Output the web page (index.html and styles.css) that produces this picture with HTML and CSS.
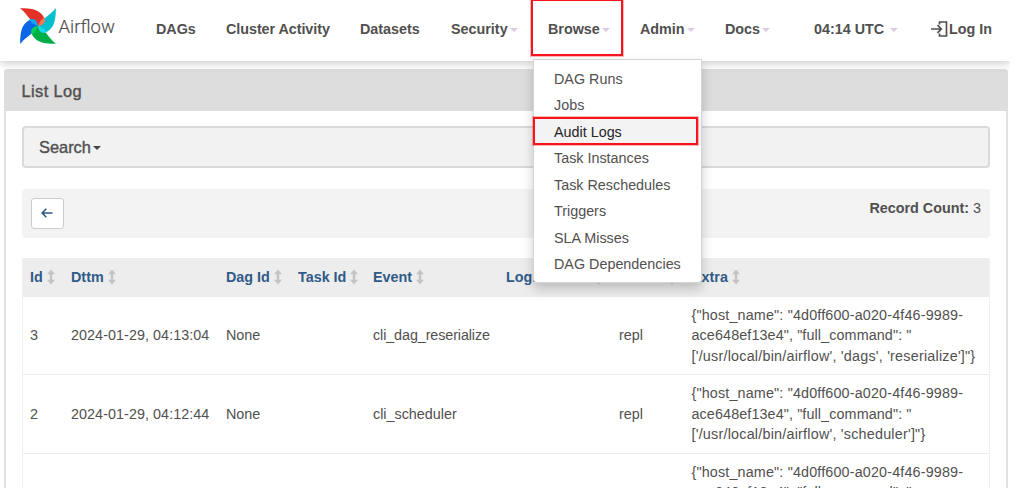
FILE: index.html
```html
<!DOCTYPE html>
<html lang="en">
<head>
<meta charset="utf-8">
<title>Airflow - List Log</title>
<link rel="stylesheet" href="styles.css">
</head>
<body>
<svg class="defs" width="0" height="0">
  <symbol id="sort" viewBox="0 0 8 16"><path d="M4 .4 8 5.200H5.200v5.600H8L4 15.600 0 10.800h2.800V5.200H0z" fill="currentColor"/></symbol>
  <symbol id="blade" viewBox="0 0 38 38"><path d="M1 1.200C9 1 18 2 22 6.500c3 3.500 4 5.500 4.200 7.500L19 19.300C17.500 15.500 14 15.500 11 12 8 8.500 6 5 1 1.200z"/></symbol>
  <symbol id="fold" viewBox="0 0 38 38"><path d="M19 19C20.500 15.500 21.500 12.500 25 10.500c2 3.500 1 7.500-6 8.500z"/></symbol>
</svg>
<div class="screen">
  <header class="navbar">
    <a class="brand">
      <svg class="logo" viewBox="0 0 38 38">
        <use href="#blade" fill="#e43127"/>
        <use href="#blade" fill="#00c0ce" transform="rotate(90 19 19)"/>
        <use href="#blade" fill="#00ad46" transform="rotate(180 19 19)"/>
        <use href="#blade" fill="#0b67e8" transform="rotate(270 19 19)"/>
        <use href="#fold" fill="#ff7557"/>
        <use href="#fold" fill="#11dcea" transform="rotate(90 19 19)"/>
        <use href="#fold" fill="#04cf59" transform="rotate(180 19 19)"/>
        <use href="#fold" fill="#0ca6f5" transform="rotate(270 19 19)"/>
      </svg>
      <span class="wordmark">Airflow</span>
    </a>
    <nav class="menu">
      <a class="n-dags"><span>DAGs</span></a>
      <a class="n-cluster"><span>Cluster Activity</span></a>
      <a class="n-data"><span>Datasets</span></a>
      <a class="n-sec"><span>Security</span><i class="caret"></i></a>
      <a class="n-browse"><span>Browse</span><i class="caret"></i></a>
      <a class="n-admin"><span>Admin</span><i class="caret"></i></a>
      <a class="n-docs"><span>Docs</span><i class="caret"></i></a>
      <a class="n-clock"><span>04:14 UTC</span><i class="caret"></i></a>
      <a class="n-login"><svg class="login" viewBox="0 0 18 16" fill="none" stroke="currentColor" stroke-width="1.700"><path d="M1 8h10.500M7.500 4.200 11.300 8l-3.800 3.800M9.500 3.500V1h7v14h-7v-2.500"/></svg><span>Log In</span></a>
    </nav>
  </header>

  <ul class="dropdown">
    <li>DAG Runs</li>
    <li>Jobs</li>
    <li class="active">Audit Logs</li>
    <li>Task Instances</li>
    <li>Task Reschedules</li>
    <li>Triggers</li>
    <li>SLA Misses</li>
    <li>DAG Dependencies</li>
  </ul>
  <div class="mark mark-browse"></div>
  <div class="mark mark-audit"></div>

  <main class="panel">
    <h1 class="panel-title"><span>List Log</span></h1>
    <div class="panel-body">
      <div class="search"><span>Search</span><i class="caret dark"></i></div>
      <div class="toolbar">
        <button class="back"><svg width="12" height="10" viewBox="0 0 12 10" fill="none" stroke="currentColor" stroke-width="1.600"><path d="M11.500 5H1.500M5.300.8 1.200 5l4.100 4.200"/></svg></button>
        <div class="count"><b>Record Count:</b> 3</div>
      </div>
      <table>
        <colgroup><col class="c1"><col class="c2"><col class="c3"><col class="c4"><col class="c5"><col class="c6"><col class="c7"><col></colgroup>
        <thead><tr>
          <th>Id<svg class="sort"><use href="#sort"/></svg></th>
          <th>Dttm<svg class="sort"><use href="#sort"/></svg></th>
          <th>Dag Id<svg class="sort"><use href="#sort"/></svg></th>
          <th>Task Id<svg class="sort"><use href="#sort"/></svg></th>
          <th>Event<svg class="sort"><use href="#sort"/></svg></th>
          <th>Logical Date<svg class="sort"><use href="#sort"/></svg></th>
          <th>Owner<svg class="sort"><use href="#sort"/></svg></th>
          <th>Extra<svg class="sort"><use href="#sort"/></svg></th>
        </tr></thead>
        <tbody>
          <tr><td>3</td><td class="date">2024-01-29, 04:13:04</td><td>None</td><td></td><td class="event">cli_dag_reserialize</td><td></td><td>repl</td>
            <td class="extra"><span class="l1">{"host_name": "4d0ff600-a020-4f46-9989-</span><br><span class="l2">ace648ef13e4", "full_command": "</span><br><span class="l3">['/usr/local/bin/airflow', 'dags', 'reserialize']"}</span></td></tr>
          <tr><td>2</td><td class="date">2024-01-29, 04:12:44</td><td>None</td><td></td><td>cli_scheduler</td><td></td><td>repl</td>
            <td class="extra"><span class="l1">{"host_name": "4d0ff600-a020-4f46-9989-</span><br><span class="l2">ace648ef13e4", "full_command": "</span><br><span class="l3">['/usr/local/bin/airflow', 'scheduler']"}</span></td></tr>
          <tr><td></td><td></td><td></td><td></td><td></td><td></td><td></td>
            <td class="extra last"><span class="l1">{"host_name": "4d0ff600-a020-4f46-9989-</span><br><span class="l2">ace648ef13e4", "full_command": "</span></td></tr>
        </tbody>
      </table>
    </div>
  </main>
</div>
</body>
</html>
```

FILE: styles.css
```css
* { box-sizing: border-box; }
body {
  margin: 0;
  background: #fff;
  color: #51504f;
  font: 14.35px/20.5px "Liberation Sans", Arial, sans-serif;
}
.defs { position: absolute; }
.screen {
  position: relative;
  width: 1010px;
  height: 488px;
  overflow: hidden;
}

/* Top navigation */
.navbar {
  position: relative;
  z-index: 1;
  display: flex;
  height: 61px;
  padding-left: 19px;
  background: #fff;
  box-shadow: 0 2px 9px rgba(0, 0, 0, .22);
}
.brand { display: flex; width: 137px; }
.logo { width: 38px; height: 38px; margin-top: 7px; }
.wordmark { margin: 17px 0 0 1.5px; font: 300 18.500px/21px Roboto, sans-serif; -webkit-text-stroke: .2px; }
.menu { display: flex; height: 58px; font-weight: bold; white-space: nowrap; }
.menu a { display: flex; align-items: center; }
.n-dags { width: 70px; }
.n-cluster { width: 134px; letter-spacing: -.05px; }
.n-data { width: 91px; }
.n-sec { width: 97px; }
.n-browse { width: 92px; }
.n-admin { width: 85px; }
.n-docs { width: 89px; }
.n-clock { width: 116px; }
.n-clock .caret { margin-left: 6px; }
.login { width: 18px; height: 16px; margin-right: 1px; }
.caret {
  margin: 2px 0 0 2px;
  border: 4px solid transparent;
  border-top-color: #e0cce2;
  border-bottom: 0;
}
.caret.dark { border-top-color: #444; margin-left: 3px; }

/* Browse menu */
.dropdown {
  position: absolute;
  z-index: 2;
  left: 533px;
  top: 59px;
  width: 169px;
  height: 224px;
  margin: 0;
  padding: 5.5px 0;
  list-style: none;
  background: #fff;
  border: 1px solid #d4d4d4;
  border-radius: 0 0 4px 4px;
  box-shadow: 0 6px 12px rgba(0, 0, 0, .2);
}
.dropdown li { height: 26.500px; padding-left: 20px; line-height: 26.500px; }
.dropdown .active { background: #f3f3f3; color: #252525; }
.mark { position: absolute; z-index: 3; border: 2.5px solid #f8141c; outline: .5px solid rgba(248, 20, 28, .3); }
.mark-browse { left: 531px; top: -1px; width: 92px; height: 57px; }
.mark-audit { left: 533px; top: 117px; width: 165px; height: 28px; }

/* Log list */
.panel {
  width: 1004px;
  height: 460px;
  margin: 8px 0 0 4px;
  border: 2px solid #e2e2e2;
  border-radius: 4px;
}
.panel-title {
  height: 42px;
  margin: -2px -2px 0;
  padding: 2px 0 0 17.500px;
  background: #ddd;
  border-radius: 4px 4px 0 0;
  font-size: 16.400px;
  letter-spacing: .4px;
  font-weight: normal;
  line-height: 41px;
  -webkit-text-stroke: .4px;
}
.panel-body { padding: 15px 16px 0; }
.search {
  display: flex;
  align-items: center;
  height: 42px;
  padding-left: 15px;
  background: #f2f2f2;
  border: 2px solid #dadada;
  border-radius: 4px;
  font-size: 16.400px;
  -webkit-text-stroke: .4px;
}
.search .caret { margin-left: 2px; }
.toolbar {
  display: flex;
  justify-content: space-between;
  height: 49px;
  margin: 21px 0 20px;
  padding: 9px 9px;
  background: #f3f3f3;
  border-radius: 4px;
}
.back {
  display: flex;
  align-items: center;
  justify-content: center;
  width: 33px;
  height: 31px;
  padding: 0 1px 1px 0;
  color: #2c5888;
  background: #fff;
  border: 1px solid #ccc;
  border-radius: 3px;
}
table {
  width: 968px;
  border-collapse: separate;
  border-spacing: 0;
  table-layout: fixed;
  border: 1px solid #f0f0f0;
  border-top: 0;
}
.c1 { width: 40px; }
.c2 { width: 155px; }
.c3 { width: 72px; }
.c4 { width: 75px; }
.c5 { width: 133px; }
.c6 { width: 113px; }
.c7 { width: 73px; }
th {
  height: 38.5px;
  padding: 0 0 0 8px;
  background: #ededed;
  color: #305b88;
  text-align: left;
  white-space: nowrap;
}
th:first-child, td:first-child { padding-left: 7px; }
.sort { width: 8px; height: 16px; margin-left: 4px; color: #c4c4c4; vertical-align: -3px; }
td {
  height: 78.500px;
  padding: 8px 0 8px 8px;
  border-bottom: 1px solid #ececec;
  white-space: nowrap;
}
.date { letter-spacing: .06px; }
.event { letter-spacing: -.1px; }
.extra { padding-left: 7.5px; }
.extra .l1 { letter-spacing: .16px; }
.extra .l2 { letter-spacing: .11px; }
.extra .l3 { letter-spacing: .22px; }
.last { vertical-align: top; }
```
